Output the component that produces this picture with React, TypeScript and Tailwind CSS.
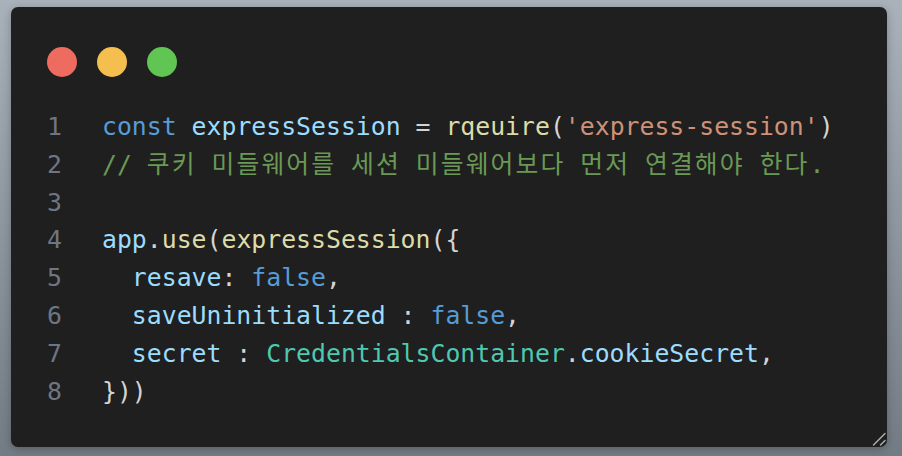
const mono = "font-['DejaVu_Sans_Mono','Noto_Sans_CJK_KR',monospace]";

type Tok = [string, string];

const c = {
  kw: "text-[#569cd6]",
  v: "text-[#9cdcfe]",
  p: "text-[#d4d4d4]",
  fn: "text-[#dcdcaa]",
  str: "text-[#ce9178]",
  cm: "text-[#6a9955]",
  ty: "text-[#4ec9b0]",
};

// hangul in the reference is a full em wide, Noto's is a bit narrower
const ko = "text-[#6a9955] tracking-[2.1px]";

const lines: Tok[][] = [
  [
    ["const", c.kw],
    [" ", c.p],
    ["expressSession", c.v],
    [" = ", c.p],
    ["rqeuire", c.fn],
    ["(", c.p],
    ["'express-session'", c.str],
    [")", c.p],
  ],
  [
    ["// ", c.cm],
    ["쿠키", ko],
    [" ", c.cm],
    ["미들웨어를", ko],
    [" ", c.cm],
    ["세션", ko],
    [" ", c.cm],
    ["미들웨어보다", ko],
    [" ", c.cm],
    ["먼저", ko],
    [" ", c.cm],
    ["연결해야", ko],
    [" ", c.cm],
    ["한다", ko],
    [".", c.cm],
  ],
  [],
  [
    ["app", c.v],
    [".", c.p],
    ["use", c.fn],
    ["(", c.p],
    ["expressSession", c.fn],
    ["({", c.p],
  ],
  [
    ["  ", c.p],
    ["resave", c.v],
    [": ", c.p],
    ["false", c.kw],
    [",", c.p],
  ],
  [
    ["  ", c.p],
    ["saveUninitialized", c.v],
    [" : ", c.p],
    ["false", c.kw],
    [",", c.p],
  ],
  [
    ["  ", c.p],
    ["secret", c.v],
    [" : ", c.p],
    ["CredentialsContainer", c.ty],
    [".", c.p],
    ["cookieSecret", c.v],
    [",", c.p],
  ],
  [["}))", c.p]],
];

export default function App() {
  return (
    <div className="w-[902px] h-[456px] bg-gradient-to-b from-[#a9b1ba] to-[#737b84] pt-[7px] pl-[11px] overflow-hidden">
      <div className="relative w-[876px] h-[440px] rounded-[7px] bg-[#1f1f1f] pl-[36px] pt-[40px] shadow-[0_2px_8px_rgba(0,0,0,0.25)]">
        {/* traffic lights */}
        <div className="flex gap-[20px]">
          <div className="w-[30px] h-[30px] rounded-full bg-[#ee6b60]" />
          <div className="w-[30px] h-[30px] rounded-full bg-[#f5bf4f]" />
          <div className="w-[30px] h-[30px] rounded-full bg-[#61c554]" />
        </div>

        {/* code */}
        <div className={`mt-[31px] ${mono} text-[24.8px] leading-[37.8px] whitespace-pre`}>
          {lines.map((toks, i) => (
            <div key={i} className="flex">
              <span className="w-[55px] shrink-0 text-[#6e7681]">{i + 1}</span>
              <span>
                {toks.map(([t, cls], j) => (
                  <span key={j} className={cls}>
                    {t}
                  </span>
                ))}
              </span>
            </div>
          ))}
        </div>

        {/* resize grip */}
        <svg
          className="absolute right-[1px] bottom-[1px]"
          width="14"
          height="14"
          viewBox="0 0 14 14"
        >
          <path d="M1.5 13 L13 1.5" stroke="#b0b0b0" strokeWidth="1.4" strokeLinecap="round" />
          <path d="M8.5 13 L13 8.5" stroke="#b0b0b0" strokeWidth="1.4" strokeLinecap="round" />
        </svg>
      </div>
    </div>
  );
}
